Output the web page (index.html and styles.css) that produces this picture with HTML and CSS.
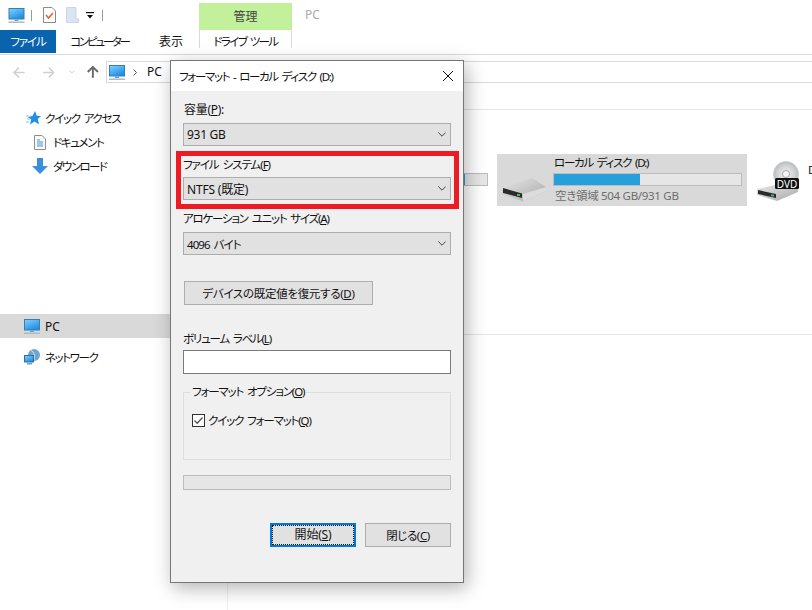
FILE: index.html
```html
<!DOCTYPE html>
<html lang="ja">
<head>
    <meta charset="UTF-8">
    <meta name="viewport" content="width=device-width, initial-scale=1.0">
    <title>フォーマット - ローカル ディスク (D:)</title>
    <link rel="stylesheet" href="styles.css">
</head>
<body>
<svg class="defs" width="0" height="0">
    <defs>
        <linearGradient id="screen" x1="0" y1="0" x2="0.6" y2="1">
            <stop offset="0" stop-color="#7ed2ff"/>
            <stop offset="1" stop-color="#1f8fe6"/>
        </linearGradient>
        <linearGradient id="diskTop" x1="0" y1="0" x2="1" y2="1">
            <stop offset="0" stop-color="#e6e6e6"/>
            <stop offset="1" stop-color="#a9a9a9"/>
        </linearGradient>
        <radialGradient id="disc">
            <stop offset="0" stop-color="#f2f2f2"/>
            <stop offset="0.6" stop-color="#d6d6d6"/>
            <stop offset="1" stop-color="#b9bdc0"/>
        </radialGradient>
        <symbol id="monitor" viewBox="0 0 16 15">
            <rect x="0.5" y="0.5" width="15" height="10.5" fill="url(#screen)" stroke="#3b7fa8"/>
            <rect x="6" y="11.5" width="4" height="1.5" fill="#6f9dbb"/>
            <rect x="0" y="13.5" width="16" height="1.5" fill="#a7bccd"/>
        </symbol>
        <symbol id="disk" viewBox="0 0 44 24">
            <path d="M0 9.5 30 0 44 9 44 13 21 23.5 0 16Z" fill="url(#diskTop)"/>
            <path d="M21 16 44 9 44 13 21 23.5Z" fill="#dcdcdc"/>
            <path d="M1 10 20 15.5 20 20 1 15Z" fill="#2b2b2b"/>
            <rect x="15" y="16" width="3" height="2" fill="#35c24a"/>
        </symbol>
    </defs>
</svg>

<header class="ribbon">
    <div class="title-row">
        <div class="qat">
            <svg class="qat-monitor" width="17" height="15"><use href="#monitor"/></svg>
            <span class="qat-sep"></span>
            <svg class="qat-check" width="13" height="16" viewBox="0 0 13 16">
                <path d="M.5.5H9L12.5 4V15.5H.5Z" fill="#fff" stroke="#8a8a8a"/>
                <path d="M3 8 5.5 11 10 6" fill="none" stroke="#e8622c" stroke-width="1.6"/>
            </svg>
            <svg class="qat-page" width="13" height="16" viewBox="0 0 13 16">
                <path d="M.5.5H10V12H12.5V15.5H.5Z" fill="#dbe5f2" stroke="#c9d6e8"/>
            </svg>
            <svg class="qat-drop" width="8" height="7" viewBox="0 0 8 7">
                <rect width="8" height="1.2" fill="#111"/>
                <path d="M1 3H7L4 6.5Z" fill="#111"/>
            </svg>
            <span class="qat-sep"></span>
        </div>
        <div class="manage-tab">管理</div>
        <div class="window-title">PC</div>
    </div>
    <nav class="tabs">
        <div class="tab tab-file">ファイル</div>
        <div class="tab tab-computer">コンピューター</div>
        <div class="tab tab-view">表示</div>
        <div class="tab tab-drive">ドライブ ツール</div>
    </nav>
</header>

<div class="nav-row">
    <div class="nav-buttons">
        <svg width="12" height="11" viewBox="0 0 12 11"><path d="M6 .5 1 5.5 6 10.5M1 5.5H12" fill="none" stroke="#cfcfcf" stroke-width="1.5"/></svg>
        <svg width="12" height="11" viewBox="0 0 12 11"><path d="M6 .5 11 5.5 6 10.5M11 5.5H0" fill="none" stroke="#cfcfcf" stroke-width="1.5"/></svg>
        <svg width="6" height="4" viewBox="0 0 6 4"><path d="M.5.5 3 3 5.500.5" fill="none" stroke="#cfcfcf"/></svg>
        <svg width="12" height="12" viewBox="0 0 12 12"><path d="M.8 6 6 .8 11.200 6M6 1V12" fill="none" stroke="#6a6a6a" stroke-width="2"/></svg>
    </div>
    <div class="address">
        <svg width="16" height="15"><use href="#monitor"/></svg>
        <svg class="crumb" width="4" height="7" viewBox="0 0 4 7"><path d="M.5.5 3.500 3.500.5 6.500" fill="none" stroke="#555"/></svg>
        <span>PC</span>
    </div>
</div>

<div class="explorer">
    <aside class="sidebar">
        <div class="side-row side-quick">
            <svg width="15" height="14" viewBox="0 0 15 14"><path d="M9 0 10.800 4.800 15 5 11.800 8 13 13.500 8.500 10.500 4 13.500 5.200 8.500 2 6 6.500 5Z" fill="#1e8fe6"/><path d="M0 5H3M1 8H4M0 11H3" stroke="#7cc0f2"/></svg>
            <span>クイック アクセス</span>
        </div>
        <div class="side-row side-child">
            <svg width="12" height="15" viewBox="0 0 12 15">
                <path d="M.5.5H8L11.500 4V14.500H.5Z" fill="#fbfbfb" stroke="#8d8d8d"/>
                <path d="M3 5H6M3 7H9M3 9H9M3 11H9" stroke="#3a94dc"/>
            </svg>
            <span>ドキュメント</span>
        </div>
        <div class="side-row side-child side-dl">
            <svg width="16" height="16" viewBox="0 0 16 16"><path d="M5 0H11V8H16L8 16 0 8H5Z" fill="#3a8fdd"/></svg>
            <span>ダウンロード</span>
        </div>
        <div class="side-row side-pc">
            <svg width="16" height="15"><use href="#monitor"/></svg>
            <span>PC</span>
        </div>
        <div class="side-row side-net">
            <svg width="16" height="16" viewBox="0 0 16 16">
                <circle cx="10" cy="6" r="6" fill="#6fa6cf"/>
                <path d="M7 1.500C10 3 11 6 10 11" fill="none" stroke="#d9e8f2"/>
                <rect x="0.500" y="6.500" width="9" height="6.500" fill="url(#screen)" stroke="#2f6f9c"/>
                <rect x="3" y="14" width="5" height="1.500" fill="#7d9db5"/>
            </svg>
            <span>ネットワーク</span>
        </div>
    </aside>
    <main class="pane">
        <div class="pane-head"></div>
        <section class="drives">
            <div class="drive drive-c">
                <svg width="44" height="24"><use href="#disk"/></svg>
                <div class="drive-info">
                    <div class="drive-name">ローカル ディスク (C:)</div>
                    <div class="bar"><div class="bar-fill" style="width: 88%"></div></div>
                    <div class="drive-free">空き領域 26.0 GB/222 GB</div>
                </div>
            </div>
            <div class="drive drive-selected">
                <svg width="44" height="24"><use href="#disk"/></svg>
                <div class="drive-info">
                    <div class="drive-name">ローカル ディスク (D:)</div>
                    <div class="bar"><div class="bar-fill" style="width: 46%"></div></div>
                    <div class="drive-free">空き領域 504 GB/931 GB</div>
                </div>
            </div>
            <div class="dvd">
                <svg width="48" height="41" viewBox="0 0 48 41">
                    <circle cx="29" cy="13" r="12.500" fill="url(#disc)" stroke="#c3c6c8" stroke-width=".6"/>
                    <circle cx="29" cy="13" r="3.500" fill="#f5f5f5" stroke="#aaa"/>
                    <path d="M0 28 18 24 41 28 41 31 20 40 0 34Z" fill="url(#diskTop)"/>
                    <path d="M1 29 19 33 19 37 1 33Z" fill="#2b2b2b"/>
                    <rect x="14" y="33.500" width="3" height="2" fill="#35c24a"/>
                    <rect x="18" y="17" width="24" height="11" rx="1.500" fill="#111"/>
                    <text class="dvd-label" x="30" y="26.500" text-anchor="middle">DVD</text>
                </svg>
                <span class="dvd-name">DVD RW ドライブ (E:)</span>
            </div>
        </section>
    </main>
</div>

<div class="dialog">
    <div class="dialog-title">
        <span>フォーマット - ローカル ディスク (D:)</span>
        <svg width="10" height="10" viewBox="0 0 10 10"><path d="M0 0 10 10M10 0 0 10" stroke="#111"/></svg>
    </div>
    <form class="dialog-body">
        <label class="field-label field-size">容量(<u>P</u>):</label>
        <div class="combo combo-size">
            <span>931 GB</span>
            <svg width="8" height="5" viewBox="0 0 8 5"><path d="M.3.500 4 4.200 7.700.5" fill="none" stroke="#444"/></svg>
        </div>
        <label class="field-label field-fs">ファイル システム(<u>F</u>)</label>
        <div class="combo combo-fs">
            <span>NTFS (既定)</span>
            <svg width="8" height="5" viewBox="0 0 8 5"><path d="M.3.500 4 4.200 7.700.5" fill="none" stroke="#444"/></svg>
        </div>
        <label class="field-label field-alloc">アロケーション ユニット サイズ(<u>A</u>)</label>
        <div class="combo combo-alloc">
            <span>4096 バイト</span>
            <svg width="8" height="5" viewBox="0 0 8 5"><path d="M.3.500 4 4.200 7.700.5" fill="none" stroke="#444"/></svg>
        </div>
        <div class="btn btn-restore">デバイスの既定値を復元する(<u>D</u>)</div>
        <label class="field-label field-volume">ボリューム ラベル(<u>L</u>)</label>
        <div class="text-input"></div>
        <fieldset class="options">
            <legend>フォーマット オプション(<u>O</u>)</legend>
            <div class="check-row">
                <svg width="13" height="13" viewBox="0 0 13 13">
                    <rect x=".5" y=".5" width="12" height="12" fill="#fff" stroke="#333"/>
                    <path d="M2.500 6.500 5.200 9.300 10.500 3.500" fill="none" stroke="#555" stroke-width="1.300"/>
                </svg>
                <span>クイック フォーマット(<u>Q</u>)</span>
            </div>
        </fieldset>
        <div class="progress"></div>
        <div class="actions">
            <div class="btn btn-primary"><span>開始(<u>S</u>)</span></div>
            <div class="btn btn-close">閉じる(<u>C</u>)</div>
        </div>
    </form>
</div>
<div class="highlight"></div>
</body>
</html>
```

FILE: styles.css
```css
html, body {
    margin: 0;
    height: 100%;
    overflow: hidden;
}
body {
    background-color: #fff;
    color: #111;
    font-family: "Noto Sans", "Noto Sans CJK JP", sans-serif;
    font-size: 11.5px;
    word-spacing: 2px;
    font-feature-settings: "palt";
    position: relative;
}
.defs {
    position: absolute;
}

/* Ribbon */
.title-row {
    display: flex;
    height: 30px;
}
.qat {
    width: 199px;
    display: flex;
    align-items: center;
    padding: 0 0 0 8px;
    box-sizing: border-box;
}
.qat-sep {
    width: 1px;
    height: 11px;
    background-color: #9a9a9a;
    margin-left: 6px;
}
.qat-check {
    margin-left: 11px;
}
.qat-page {
    margin-left: 10px;
}
.qat-drop {
    margin-left: 7px;
}
.qat .qat-drop + .qat-sep {
    margin-left: 8px;
}
.manage-tab {
    width: 93px;
    height: 27px;
    margin-top: 3px;
    background-color: #c3f09b;
    color: #444;
    font-size: 12px;
    text-align: center;
    line-height: 27px;
}
.window-title {
    margin-left: 13px;
    color: #aaa;
    font-size: 12px;
    line-height: 30px;
}
.tabs {
    display: flex;
    height: 25px;
    box-sizing: border-box;
    border-bottom: 1px solid #dadada;
}
.tab {
    height: 23px;
    line-height: 24px;
    text-align: center;
    box-sizing: border-box;
}
.tab-file {
    width: 56px;
    background-color: #0a63ad;
    color: #fff;
    letter-spacing: -1.1px;
}
.tab-computer {
    width: 87px;
    letter-spacing: -2.25px;
}
.tab-view {
    width: 56px;
    font-size: 12px;
}
.tab-drive {
    width: 93px;
    height: 18px;
    line-height: 24px;
    border-left: 1px solid #d9d9d9;
    border-right: 1px solid #d9d9d9;
    letter-spacing: -1.6px;
}

/* Back / forward / address */
.nav-row {
    display: flex;
    margin-top: 6px;
    height: 22px;
}
.nav-buttons {
    width: 106px;
    display: flex;
    align-items: center;
    padding: 0 7px 0 13px;
    box-sizing: border-box;
    gap: 18px;
}
.nav-buttons svg:nth-child(3) {
    margin: 0 -6px 0 -3px;
}
.address {
    flex: 1;
    display: flex;
    align-items: center;
    border-top: 1px solid #d9d9d9;
    border-bottom: 1px solid #d9d9d9;
    border-left: 1px solid #d9d9d9;
    padding-left: 2px;
    font-size: 12px;
}
.crumb {
    margin-left: 8px;
}
.address span {
    margin-left: 10px;
    margin-top: -1px;
}

/* Body */
.explorer {
    display: flex;
    height: 527px;
}
.sidebar {
    width: 228px;
    box-sizing: border-box;
    border-right: 1px solid #efefef;
    padding-top: 23px;
    flex-shrink: 0;
}
.side-row {
    height: 24px;
    display: flex;
    align-items: center;
}
.side-quick {
    padding-left: 26px;
    gap: 4px;
    letter-spacing: -1.25px;
}
.side-child {
    padding-left: 34px;
    gap: 7px;
    letter-spacing: -1.4px;
}
.side-dl {
    padding-left: 32px;
    gap: 5px;
    letter-spacing: -1.55px;
}
.side-pc {
    margin-top: 136px;
    padding-left: 24px;
    gap: 5px;
    background-color: #d9d9d9;
    font-size: 12px;
}
.side-net {
    margin-top: 7px;
    padding-left: 24px;
    gap: 5px;
    letter-spacing: -1.4px;
}
.pane {
    flex: 1;
    min-width: 0;
}
.pane-head {
    height: 27px;
    box-sizing: border-box;
    border-bottom: 1px solid #e5e5e5;
}
.drives {
    height: 225px;
    box-sizing: border-box;
    border-bottom: 1px solid #e5e5e5;
    padding: 44px 0 0 15px;
    display: flex;
    align-items: flex-start;
    gap: 4px;
}
.drive {
    width: 250px;
    height: 52px;
    flex-shrink: 0;
    display: flex;
    box-sizing: border-box;
    padding: 0 5px;
}
.drive-selected {
    background-color: #d9d9d9;
}
.drive > svg {
    margin-top: 24px;
    flex-shrink: 0;
}
.drive-info {
    margin-left: 7px;
    flex: 1;
    min-width: 0;
}
.drive-name {
    line-height: 18px;
    white-space: nowrap;
    padding-left: 1px;
    letter-spacing: -1.25px;
}
.bar {
    height: 13px;
    margin-top: 1px;
    box-sizing: border-box;
    border: 1px solid #bcbcbc;
    background-color: #e6e6e6;
}
.bar-fill {
    height: 100%;
    background-color: #26a0da;
}
.drive-free {
    margin-top: 1px;
    padding-left: 2px;
    color: #6d6d6d;
    line-height: 18px;
    white-space: nowrap;
    letter-spacing: -0.3px;
    word-spacing: 0;
}
.dvd {
    display: flex;
    flex-shrink: 0;
    margin: 7px 0 0 6px;
    white-space: nowrap;
}
.dvd-label {
    fill: #fff;
    font-size: 10px;
}
.dvd-name {
    margin-left: 3px;
    line-height: 18px;
}

/* Format dialog */
.dialog {
    position: absolute;
    left: 170px;
    top: 60px;
    width: 294px;
    height: 523px;
    box-sizing: border-box;
    border: 1px solid #767676;
    background-color: #f0f0f0;
    box-shadow: 3px 5px 18px rgba(0, 0, 0, 0.3);
}
.dialog-title {
    height: 30px;
    background-color: #fff;
    display: flex;
    align-items: center;
    justify-content: space-between;
    padding: 0 10px 0 8px;
    letter-spacing: -1.3px;
}
.dialog-body {
    padding: 11px 12px 0;
}
.field-label {
    display: block;
    line-height: 16px;
    margin: 0 0 5px 0;
    letter-spacing: -1.2px;
}
.field-size {
    margin-left: 1px;
    font-size: 12px;
    letter-spacing: -0.3px;
}
.field-fs {
    margin: 11px 0 4px;
    letter-spacing: -1.05px;
}
.field-alloc {
    margin-top: 11px;
}
.field-volume {
    margin: 26px 0 3px;
    letter-spacing: -1.2px;
}
.combo {
    height: 23px;
    box-sizing: border-box;
    border: 1px solid #adadad;
    background-color: #e1e1e1;
    display: flex;
    align-items: center;
    justify-content: space-between;
    padding: 0 4px 0 3px;
}
.combo-size {
    letter-spacing: -0.3px;
    font-size: 12px;
    word-spacing: 0;
}
.combo-fs {
    font-size: 12px;
    letter-spacing: -0.2px;
    word-spacing: 0;
}
.combo-alloc {
    letter-spacing: -0.95px;
}
.btn {
    width: 86px;
    height: 24px;
    box-sizing: border-box;
    border: 1px solid #adadad;
    background-color: #e1e1e1;
    display: flex;
    align-items: center;
    justify-content: center;
}
.btn-restore {
    width: 189px;
    margin: 26px 0 0 1px;
    letter-spacing: -0.3px;
}
.btn-close {
    letter-spacing: -0.4px;
}
.text-input {
    height: 24px;
    box-sizing: border-box;
    border: 1px solid #7a7a7a;
    background-color: #fff;
}
.options {
    margin: 10px 0 0;
    padding: 0 8px 31px;
    border: 1px solid #dcdcdc;
    min-width: 0;
}
.options legend {
    padding: 0 2px;
    margin-left: -2px;
    line-height: 16px;
    letter-spacing: -1.15px;
}
.check-row {
    display: flex;
    align-items: center;
    gap: 3px;
    height: 16px;
    margin-top: 12px;
    letter-spacing: -1.15px;
}
.progress {
    height: 15px;
    margin-top: 15px;
    box-sizing: border-box;
    border: 1px solid #bcbcbc;
    background-color: #e6e6e6;
}
.actions {
    display: flex;
    justify-content: flex-end;
    gap: 9px;
    margin-top: 33px;
}
.btn-primary {
    border: 2px solid #0078d7;
    padding: 0;
    font-size: 12px;
}
.btn-primary span {
    flex: 1;
    align-self: stretch;
    text-align: center;
    line-height: 18px;
    border: 1px dotted #111;
    letter-spacing: -0.2px;
}

/* Red marker drawn over the screenshot */
.highlight {
    position: absolute;
    left: 176px;
    top: 151px;
    width: 283px;
    height: 58px;
    box-sizing: border-box;
    border: 5px solid #ed1c24;
}
```
